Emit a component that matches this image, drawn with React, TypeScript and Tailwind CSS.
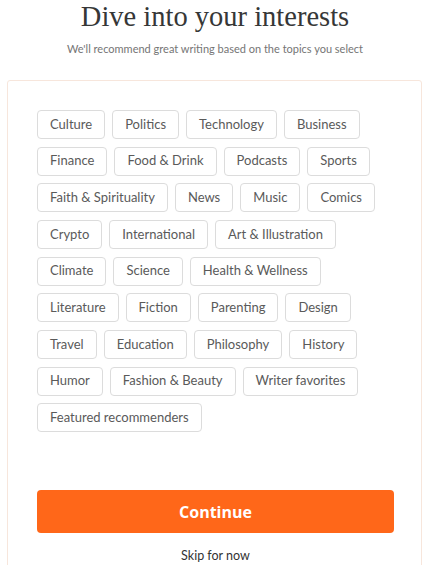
import React from "react";

const topics = [
  "Culture",
  "Politics",
  "Technology",
  "Business",
  "Finance",
  "Food & Drink",
  "Podcasts",
  "Sports",
  "Faith & Spirituality",
  "News",
  "Music",
  "Comics",
  "Crypto",
  "International",
  "Art & Illustration",
  "Climate",
  "Science",
  "Health & Wellness",
  "Literature",
  "Fiction",
  "Parenting",
  "Design",
  "Travel",
  "Education",
  "Philosophy",
  "History",
  "Humor",
  "Fashion & Beauty",
  "Writer favorites",
  "Featured recommenders",
];

export default function App() {
  return (
    <div className="w-[440px] h-[565px] overflow-hidden bg-white font-['Lato',sans-serif]">
      <div className="w-[430px]">
        <h1 className="text-center font-['Liberation_Serif',serif] text-[28.5px] leading-[34px] text-[#363737]">
          Dive into your interests
        </h1>
        <p className="mt-[7px] text-center text-[11px] leading-[16px] text-[#757575]">
          We'll recommend great writing based on the topics you select
        </p>
      </div>
      <div className="mx-[7px] mt-[23px] w-[415px] h-[600px] rounded-[3px] border border-[#f7e6dc] px-[29px] pt-[29px]">
        <div className="flex flex-wrap gap-x-[7px] gap-y-[7.67px]">
          {topics.map((t) => (
            <div
              key={t}
              className="h-[29px] px-[12px] flex items-center rounded-[4px] border border-[#dcdcdc] text-[13px] text-[#5a5a5a] whitespace-nowrap"
            >
              {t}
            </div>
          ))}
        </div>
        <button className="mt-[58px] w-[357px] h-[43px] rounded-[4px] bg-[#ff6719] text-white font-bold text-[16px] font-['Open_Sans',sans-serif]">
          Continue
        </button>
        <div className="mt-[14px] w-[357px] text-center text-[12.5px] text-[#333333]">
          Skip for now
        </div>
      </div>
    </div>
  );
}
